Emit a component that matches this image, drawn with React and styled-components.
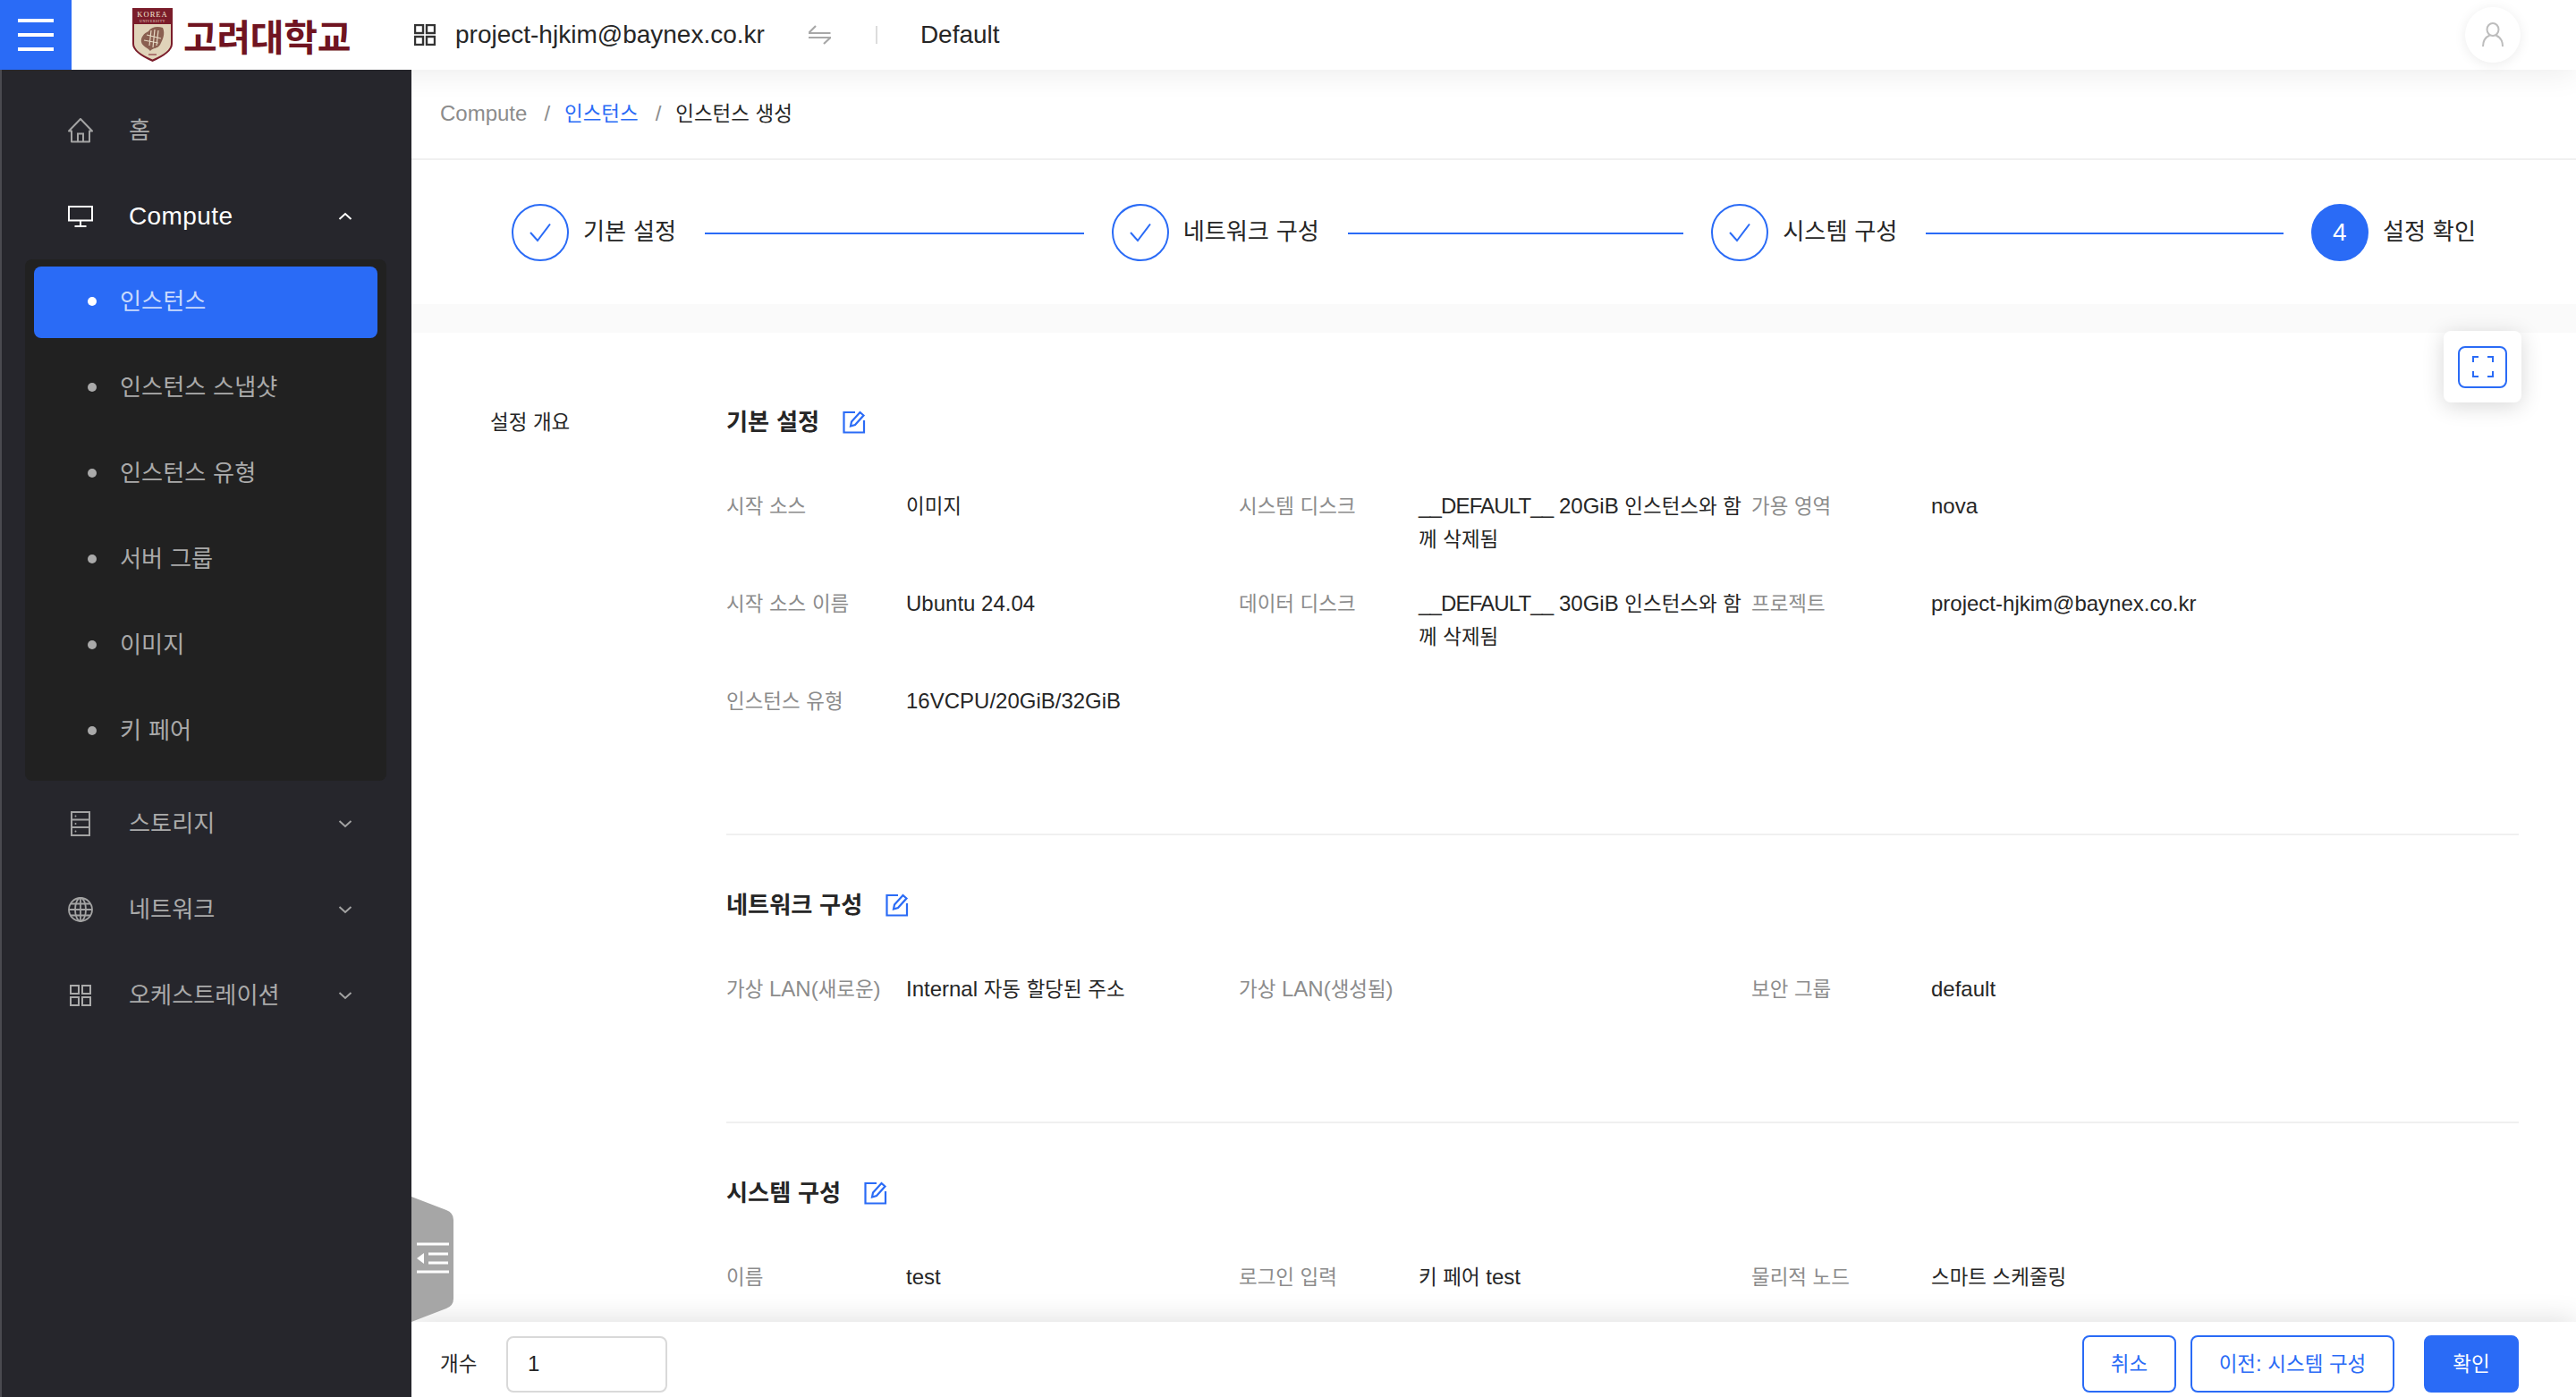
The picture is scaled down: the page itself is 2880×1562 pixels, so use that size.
import React from "react";
import styled, { createGlobalStyle } from "styled-components";

const BLUE = "#2a6bf6";
const FONT = `"Liberation Sans", "Noto Sans CJK KR", sans-serif`;

const Global = createGlobalStyle`
  html, body { margin: 0; padding: 0; height: 100%; background: #fff; }
  #root { height: 100%; }
  * { box-sizing: border-box; }
`;

const Ko = styled.span`
  font-size: 0.935em;
  line-height: 1;
`;
const Tight = styled.span`
  letter-spacing: -0.85px;
`;
const SPLIT = /([\uAC00-\uD7A3]+|__DEFAULT__)/;
const T = ({ children }) =>
  String(children)
    .split(SPLIT)
    .map((part, i) =>
      part === "__DEFAULT__" ? (
        <Tight key={i}>{part}</Tight>
      ) : SPLIT.test(part) ? (
        <Ko key={i}>{part}</Ko>
      ) : (
        part
      )
    );

const Page = styled.div`
  width: 100%;
  height: 100vh;
  display: flex;
  flex-direction: column;
  overflow: hidden;
  font-family: ${FONT};
  font-size: 24px;
  color: #262626;
`;

const Header = styled.header`
  position: relative;
  z-index: 3;
  flex: none;
  height: 78px;
  display: flex;
  align-items: center;
  background: #fff;
  box-shadow: 0 6px 32px rgba(0, 0, 0, 0.07);
`;
const MenuButton = styled.button`
  width: 80px;
  height: 78px;
  flex: none;
  border: 0;
  padding: 0 20px;
  background: ${BLUE};
  display: flex;
  flex-direction: column;
  justify-content: center;
  gap: 12px;
`;
const MenuLine = styled.span`
  display: block;
  height: 4px;
  background: #fff;
`;
const Logo = styled.div`
  margin-left: 68px;
  width: 315px;
  flex: none;
  display: flex;
  align-items: center;
  gap: 12px;
`;
const LogoText = styled.span`
  font-family: "Noto Sans CJK KR", sans-serif;
  font-size: 41px;
  line-height: 48px;
  font-weight: 700;
  color: #701421;
  letter-spacing: -0.3px;
  white-space: nowrap;
`;
const ProjectText = styled.span`
  margin-left: 22px;
  font-size: 28px;
  color: #262626;
  white-space: nowrap;
`;
const SwapWrap = styled.span`
  margin-left: 49px;
  display: flex;
`;
const HeadDivider = styled.span`
  margin-left: 50px;
  width: 2px;
  height: 20px;
  background: #dcdcdc;
`;
const DomainText = styled.span`
  margin-left: 48px;
  font-size: 28px;
  color: #262626;
`;
const Avatar = styled.div`
  margin-left: auto;
  margin-right: 62px;
  width: 62px;
  height: 62px;
  border-radius: 50%;
  background: #fff;
  box-shadow: 0 2px 14px rgba(0, 0, 0, 0.08);
  display: flex;
  align-items: center;
  justify-content: center;
`;

const Body = styled.div`
  flex: 1;
  min-height: 0;
  display: flex;
`;

const Sidebar = styled.nav`
  position: relative;
  z-index: 4;
  width: 460px;
  flex: none;
  background: #26262c;
  border-left: 2px solid #4a4a50;
  padding-top: 28px;
  display: flex;
  flex-direction: column;
`;
const NavItem = styled.div`
  height: 80px;
  flex: none;
  display: flex;
  align-items: center;
  margin-bottom: ${(p) => (p.$open ? "8px" : "16px")};
  margin-left: -2px;
  padding-right: 66px;
  color: ${(p) => (p.$open ? "#fff" : "#aaaaaa")};
  font-size: 28px;
  letter-spacing: ${(p) => (p.$open ? "0.4px" : "0")};
`;
const NavIconBox = styled.span`
  width: 72px;
  height: 32px;
  margin-left: 54px;
  margin-right: 18px;
  display: flex;
  align-items: center;
  justify-content: center;
  flex: none;
`;
const NavChevron = styled.span`
  margin-left: auto;
  display: flex;
`;
const SubPanel = styled.div`
  width: 404px;
  margin: 0 0 8px 26px;
  padding: 8px 10px 15px;
  background: #212121;
  border-radius: 8px;
  display: flex;
  flex-direction: column;
  gap: 16px;
`;
const SubItem = styled.div`
  height: 80px;
  display: flex;
  align-items: center;
  padding-left: 60px;
  padding-bottom: 2px;
  border-radius: 8px;
  font-size: 28px;
  background: ${(p) => (p.$active ? BLUE : "transparent")};
  color: ${(p) => (p.$active ? "#c9dafc" : "#aaaaaa")};
`;
const SubDot = styled.span`
  width: 10px;
  height: 10px;
  border-radius: 50%;
  margin-right: 26px;
  flex: none;
  background: ${(p) => (p.$active ? "#fff" : "#aaaaaa")};
`;
const SubText = styled.span`
  display: block;
`;

const Main = styled.main`
  position: relative;
  flex: 1;
  min-width: 0;
  display: flex;
  flex-direction: column;
`;
const Breadcrumb = styled.div`
  flex: none;
  height: 101px;
  padding: 0 32px 1px 32px;
  display: flex;
  align-items: center;
  border-bottom: 2px solid #f0f0f0;
  font-size: 24px;
  white-space: pre;
`;
const Crumb = styled.span`
  color: ${(p) => (p.$link ? BLUE : p.$current ? "#262626" : "#8c8c8c")};
`;
const CrumbSep = styled.span`
  margin: 0 16px 0 19px;
  color: #8c8c8c;
`;
const Stepper = styled.div`
  flex: none;
  height: 161px;
  padding: 0 112px 0 112px;
  display: flex;
  align-items: center;
`;
const Step = styled.div`
  flex: ${(p) => (p.$last ? "none" : "1 1 0")};
  display: flex;
  align-items: center;
  min-width: 0;
`;
const StepCircle = styled.span`
  width: 64px;
  height: 64px;
  flex: none;
  border-radius: 50%;
  border: 2px solid ${BLUE};
  background: ${(p) => (p.$current ? BLUE : "#fff")};
  color: #fff;
  font-size: 28px;
  display: flex;
  align-items: center;
  justify-content: center;
`;
const StepLabel = styled.span`
  margin-left: 16px;
  margin-bottom: 2px;
  font-size: 28px;
  color: #262626;
  white-space: nowrap;
`;
const StepLine = styled.span`
  flex: 1;
  height: 2px;
  background: ${BLUE};
  margin: 2px 31px 0 32px;
`;
const Band = styled.div`
  flex: none;
  height: 32px;
  background: #fafafa;
`;
const Content = styled.div`
  flex: 1;
  min-height: 0;
  overflow: hidden;
  display: flex;
  padding: 80px 64px 0 88px;
`;
const OverviewLabel = styled.div`
  flex: none;
  width: 264px;
  line-height: 40px;
  font-size: 24px;
  color: #262626;
`;
const Details = styled.div`
  flex: 1;
  min-width: 0;
`;
const Section = styled.section`
  padding-bottom: ${(p) => (p.$last ? "0" : "129px")};
  margin-bottom: 58px;
  border-bottom: ${(p) => (p.$last ? "0" : "2px solid #f0f0f0")};
`;
const SectionTitle = styled.h3`
  margin: 0 0 55px;
  height: 40px;
  display: flex;
  align-items: center;
  gap: 26px;
  font-size: 28px;
  line-height: 40px;
  font-weight: 700;
  color: #262626;
`;
const TitleText = styled.span`
  white-space: pre;
`;
const Grid = styled.div`
  display: grid;
  grid-template-columns: repeat(3, 573px);
  row-gap: 35px;
  font-size: 24px;
  line-height: 37px;
  margin-bottom: 1px;
`;
const Field = styled.div`
  display: flex;
  min-width: 0;
`;
const FieldLabel = styled.span`
  width: 201px;
  flex: none;
  color: #8c8c8c;
  white-space: nowrap;
`;
const FieldValue = styled.span`
  width: 372px;
  flex: none;
  color: #262626;
`;
const FullscreenCard = styled.div`
  position: absolute;
  top: 292px;
  left: 2272px;
  width: 87px;
  height: 80px;
  border-radius: 8px;
  background: #fff;
  box-shadow: 0 4px 24px rgba(0, 0, 0, 0.16);
  display: flex;
  align-items: center;
  justify-content: center;
`;
const FullscreenButton = styled.button`
  width: 55px;
  height: 47px;
  padding: 0;
  border: 2px solid ${BLUE};
  border-radius: 8px;
  background: #fff;
  display: flex;
  align-items: center;
  justify-content: center;
`;
const CollapseTab = styled.div`
  position: absolute;
  left: 0;
  top: 1260px;
  width: 47px;
  height: 140px;
  z-index: 2;
  display: flex;
`;
const Footer = styled.footer`
  position: relative;
  z-index: 1;
  flex: none;
  height: 84px;
  padding: 10px 64px 0 32px;
  background: #fff;
  box-shadow: 0 -4px 30px rgba(0, 0, 0, 0.12);
  display: flex;
  align-items: center;
`;
const CountLabel = styled.span`
  width: 74px;
  flex: none;
  font-size: 24px;
  color: #262626;
`;
const CountInput = styled.div`
  width: 180px;
  height: 63px;
  border: 2px solid #d9d9d9;
  border-radius: 8px;
  padding-left: 22px;
  display: flex;
  align-items: center;
  font-size: 24px;
  color: #262626;
`;
const Actions = styled.div`
  margin-left: auto;
  display: flex;
  align-items: center;
`;
const Button = styled.button`
  height: 64px;
  padding: 0;
  width: ${(p) => p.$w}px;
  margin-left: ${(p) => p.$ml || 0}px;
  border: 2px solid ${BLUE};
  border-radius: 8px;
  background: ${(p) => (p.$primary ? BLUE : "#fff")};
  color: ${(p) => (p.$primary ? "#fff" : BLUE)};
  font-family: ${FONT};
  font-size: 24px;
`;

/* ---------- drawings ---------- */
const Shield = () => (
  <svg width="45" height="60" viewBox="0 0 45 60">
    <path d="M0 0H45V40Q45 50 22.500 60Q0 50 0 40Z" fill="#7a1c2a" />
    <path d="M2 18H43V40Q43 49 22.500 57.500Q2 49 2 40Z" fill="#e0d3b9" />
    <text x="22.500" y="9.500" textAnchor="middle" fontSize="8.500" fill="#f2e6d4" fontFamily="Liberation Serif" letterSpacing="1">KOREA</text>
    <text x="22.500" y="15.500" textAnchor="middle" fontSize="4" fill="#e8d9c2" fontFamily="Liberation Serif" letterSpacing="0.500">UNIVERSITY</text>
    <path d="M34 22C28 20 21 21 18 26C13 28 9 33 10 38C11 43 17 44 20 48C23 44 28 46 31 41C34 35 37 29 34 22Z" fill="#8a5f50" />
    <path d="M21 25L19 42M25 24L23 44M29 25L27 42M16 30L32 34M13 36L29 39" stroke="#e6dac4" strokeWidth="1.200" fill="none" />
    <path d="M18 52H27" stroke="#7a1c2a" strokeWidth="1" />
  </svg>
);

const GridIcon = ({ size = 24, color = "#aaaaaa", sw = 2 }) => (
  <svg width={size} height={size} viewBox="0 0 24 24" fill="none" stroke={color} strokeWidth={sw}>
    <rect x="1" y="1" width="9" height="9" />
    <rect x="14" y="1" width="9" height="9" />
    <rect x="1" y="14" width="9" height="9" />
    <rect x="14" y="14" width="9" height="9" />
  </svg>
);
const HomeIcon = () => (
  <svg width="28" height="28" viewBox="0 0 28 28" fill="none" stroke="#a3a3a3" strokeWidth="2">
    <path d="M1 14.500L14 1L27 14.500H24V26.500H4V14.500Z" strokeLinejoin="round" />
    <path d="M11 26.500V17.500H17V26.500" />
  </svg>
);
const MonitorIcon = () => (
  <svg width="28" height="24" viewBox="0 0 28 24" fill="none" stroke="#fff" strokeWidth="2">
    <rect x="1" y="1" width="26" height="15.500" />
    <path d="M14 16.500V23M7.500 23H20.500" />
  </svg>
);
const StorageIcon = () => (
  <svg width="22" height="28" viewBox="0 0 22 28" fill="none" stroke="#a3a3a3" strokeWidth="2">
    <rect x="1" y="1" width="20" height="26" />
    <path d="M1 9.500H21M1 18H21" />
    <circle cx="5.500" cy="5.500" r="1" fill="#a3a3a3" stroke="none" />
    <circle cx="5.500" cy="14" r="1" fill="#a3a3a3" stroke="none" />
    <circle cx="5.500" cy="22.500" r="1" fill="#a3a3a3" stroke="none" />
  </svg>
);
const GlobeIcon = () => (
  <svg width="28" height="28" viewBox="0 0 28 28" fill="none" stroke="#a3a3a3" strokeWidth="1.800">
    <circle cx="14" cy="14" r="13" />
    <ellipse cx="14" cy="14" rx="6" ry="13" />
    <path d="M14 1V27M1 14H27M3 7.500H25M3 20.500H25" />
  </svg>
);
const Chevron = ({ up, color }) => (
  <svg width="16" height="10" viewBox="0 0 16 10" fill="none" stroke={color} strokeWidth="2">
    <path d={up ? "M1.500 8L8 2L14.500 8" : "M1.500 2L8 8L14.500 2"} />
  </svg>
);
const SwapIcon = () => (
  <svg width="25" height="22" viewBox="0 0 25 22" fill="none" stroke="#a8a8a8" strokeWidth="2.200">
    <path d="M0 9H24.500L0 9L8 1" />
    <path d="M0 14H24.500L17 21" />
  </svg>
);
const UserIcon = () => (
  <svg width="24" height="28" viewBox="0 0 24 28" fill="none" stroke="#bdbdbd" strokeWidth="2">
    <ellipse cx="12" cy="8" rx="6.500" ry="7" />
    <path d="M1 27C1 20 5 16 8.500 14.500M23 27C23 20 19 16 15.500 14.500" />
  </svg>
);
const CheckIcon = () => (
  <svg width="26" height="22" viewBox="0 0 26 22" fill="none" stroke={BLUE} strokeWidth="2">
    <path d="M2 11L10 20L24 1.500" />
  </svg>
);
const EditIcon = () => (
  <svg width="26" height="26" viewBox="0 0 26 26" fill="none" stroke={BLUE} strokeWidth="2.200">
    <path d="M14 2H1.500V24.500H24V11" />
    <path d="M9 17.500L10 12.500L19.500 2L23.500 5.500L14 16Z" />
  </svg>
);
const FullscreenIcon = () => (
  <svg width="24" height="24" viewBox="0 0 24 24" fill="none" stroke={BLUE} strokeWidth="2">
    <path d="M1 7V1H7M17 1H23V7M23 17V23H17M7 23H1V17" />
  </svg>
);
const TabShape = () => (
  <svg width="47" height="140" viewBox="0 0 47 140">
    <path d="M0 0L39 15Q47 18 47 26V114Q47 122 39 125L0 140Z" fill="#a6a6a6" />
    <path d="M6 53H42M19 64H41M19 74H41M6 84H42" stroke="#fff" strokeWidth="3" />
    <path d="M6 69L14 63V75Z" fill="#fff" />
  </svg>
);

/* ---------- data ---------- */
const subItems = ["인스턴스", "인스턴스 스냅샷", "인스턴스 유형", "서버 그룹", "이미지", "키 페어"];
const steps = ["기본 설정", "네트워크 구성", "시스템 구성", "설정 확인"];
const sections = [
  {
    title: "기본 설정",
    fields: [
      ["시작 소스", "이미지"],
      ["시스템 디스크", "__DEFAULT__ 20GiB 인스턴스와 함께 삭제됨"],
      ["가용 영역", "nova"],
      ["시작 소스 이름", "Ubuntu 24.04"],
      ["데이터 디스크", "__DEFAULT__ 30GiB 인스턴스와 함께 삭제됨"],
      ["프로젝트", "project-hjkim@baynex.co.kr"],
      ["인스턴스 유형", "16VCPU/20GiB/32GiB"],
    ],
  },
  {
    title: "네트워크 구성",
    fields: [
      ["가상 LAN(새로운)", "Internal 자동 할당된 주소"],
      ["가상 LAN(생성됨)", ""],
      ["보안 그룹", "default"],
    ],
  },
  {
    title: "시스템 구성",
    last: true,
    fields: [
      ["이름", "test"],
      ["로그인 입력", "키 페어 test"],
      ["물리적 노드", "스마트 스케줄링"],
    ],
  },
];
const lowerNav = [
  ["스토리지", StorageIcon],
  ["네트워크", GlobeIcon],
  ["오케스트레이션", GridIcon],
];

export default function App() {
  return (
    <Page>
      <Global />
      <Header>
        <MenuButton aria-label="menu">
          <MenuLine />
          <MenuLine />
          <MenuLine />
        </MenuButton>
        <Logo>
          <Shield />
          <LogoText>고려대학교</LogoText>
        </Logo>
        <GridIcon color="#333" sw={2.4} />
        <ProjectText>project-hjkim@baynex.co.kr</ProjectText>
        <SwapWrap>
          <SwapIcon />
        </SwapWrap>
        <HeadDivider />
        <DomainText>Default</DomainText>
        <Avatar>
          <UserIcon />
        </Avatar>
      </Header>
      <Body>
        <Sidebar>
          <NavItem>
            <NavIconBox>
              <HomeIcon />
            </NavIconBox>
            <SubText>
              <T>홈</T>
            </SubText>
          </NavItem>
          <NavItem $open>
            <NavIconBox>
              <MonitorIcon />
            </NavIconBox>
            <SubText>Compute</SubText>
            <NavChevron>
              <Chevron up color="#fff" />
            </NavChevron>
          </NavItem>
          <SubPanel>
            {subItems.map((s, i) => (
              <SubItem key={s} $active={i === 0}>
                <SubDot $active={i === 0} />
                <SubText>
                  <T>{s}</T>
                </SubText>
              </SubItem>
            ))}
          </SubPanel>
          {lowerNav.map(([label, Icon]) => (
            <NavItem key={label}>
              <NavIconBox>
                <Icon />
              </NavIconBox>
              <SubText>
                <T>{label}</T>
              </SubText>
              <NavChevron>
                <Chevron color="#a3a3a3" />
              </NavChevron>
            </NavItem>
          ))}
        </Sidebar>
        <Main>
          <Breadcrumb>
            <Crumb>Compute</Crumb>
            <CrumbSep>/</CrumbSep>
            <Crumb $link>
              <T>인스턴스</T>
            </Crumb>
            <CrumbSep>/</CrumbSep>
            <Crumb $current>
              <T>인스턴스 생성</T>
            </Crumb>
          </Breadcrumb>
          <Stepper>
            {steps.map((s, i) => {
              const last = i === steps.length - 1;
              return (
                <Step key={s} $last={last}>
                  <StepCircle $current={last}>{last ? "4" : <CheckIcon />}</StepCircle>
                  <StepLabel>
                    <T>{s}</T>
                  </StepLabel>
                  {!last && <StepLine />}
                </Step>
              );
            })}
          </Stepper>
          <Band />
          <Content>
            <OverviewLabel>
              <T>설정 개요</T>
            </OverviewLabel>
            <Details>
              {sections.map((sec) => (
                <Section key={sec.title} $last={sec.last}>
                  <SectionTitle>
                    <TitleText>
                      <T>{sec.title}</T>
                    </TitleText>
                    <EditIcon />
                  </SectionTitle>
                  <Grid>
                    {sec.fields.map(([k, v]) => (
                      <Field key={k}>
                        <FieldLabel>
                          <T>{k}</T>
                        </FieldLabel>
                        <FieldValue>
                          <T>{v}</T>
                        </FieldValue>
                      </Field>
                    ))}
                  </Grid>
                </Section>
              ))}
            </Details>
          </Content>
          <Footer>
            <CountLabel>
              <T>개수</T>
            </CountLabel>
            <CountInput>1</CountInput>
            <Actions>
              <Button $w={105}>
                <T>취소</T>
              </Button>
              <Button $w={228} $ml={16}>
                <T>이전: 시스템 구성</T>
              </Button>
              <Button $w={106} $ml={33} $primary>
                <T>확인</T>
              </Button>
            </Actions>
          </Footer>
          <FullscreenCard>
            <FullscreenButton aria-label="fullscreen">
              <FullscreenIcon />
            </FullscreenButton>
          </FullscreenCard>
          <CollapseTab>
            <TabShape />
          </CollapseTab>
        </Main>
      </Body>
    </Page>
  );
}
